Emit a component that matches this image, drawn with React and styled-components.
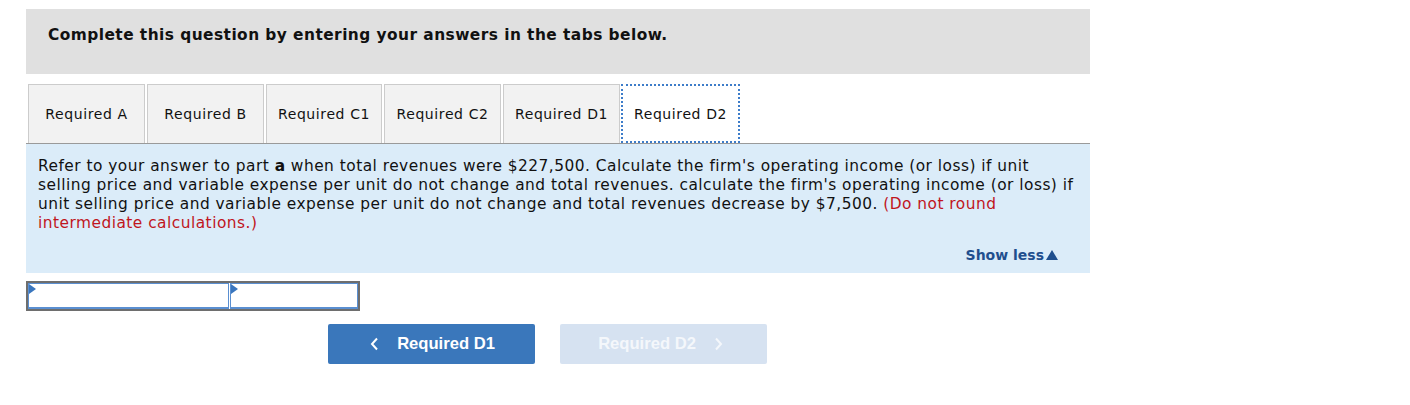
import React from "react";
import styled, { createGlobalStyle } from "styled-components";

const GlobalStyle = createGlobalStyle`
  body {
    margin: 0;
    background: #ffffff;
    font-family: "DejaVu Sans", Verdana, sans-serif;
    color: #111;
  }
`;

const Page = styled.div`
  width: 1064px;
  padding: 9px 0 0 26px;
`;

const Banner = styled.div`
  height: 65px;
  background: #e0e0e0;
  padding: 16px 0 0 22px;
  box-sizing: border-box;
  font-size: 15.4px;
  letter-spacing: 0.45px;
  font-weight: bold;
  line-height: 21px;
`;

const TabRow = styled.div`
  display: flex;
  gap: 2px;
  margin-top: 10px;
  padding-left: 2px;
  border-bottom: 1px solid #9a9a9a;
`;

const Tab = styled.div`
  width: ${(p) => p.$w}px;
  height: 59px;
  box-sizing: border-box;
  display: flex;
  align-items: center;
  justify-content: center;
  font-size: 14px;
  letter-spacing: 0.6px;
  white-space: nowrap;
  color: #111;
  background: ${(p) => (p.$active ? "#ffffff" : "#f2f2f2")};
  border: ${(p) => (p.$active ? "2px dotted #3d7cc9" : "1px solid #cccccc")};
  border-bottom: ${(p) => (p.$active ? "2px dotted #3d7cc9" : "none")};
  margin-bottom: ${(p) => (p.$active ? "-1px" : "0")};
  margin-left: ${(p) => (p.$active ? "-1px" : "0")};
`;

const Panel = styled.div`
  background: #dbecf9;
  padding: 13px 12px 10px 12px;
  height: 129px;
  box-sizing: border-box;
  display: flex;
  flex-direction: column;
`;

const Prompt = styled.p`
  margin: 0;
  font-size: 15.4px;
  letter-spacing: 0.48px;
  line-height: 19px;
  white-space: nowrap;
  color: #111;
`;

const Note = styled.span`
  color: #c0161d;
`;

const ShowLess = styled.div`
  margin-top: auto;
  align-self: flex-end;
  margin-right: 20px;
  font-size: 14px;
  font-weight: bold;
  color: #1f4f8e;
  display: flex;
  align-items: center;
  gap: 2px;
`;

const Triangle = styled.span`
  width: 0;
  height: 0;
  border-left: 6px solid transparent;
  border-right: 6px solid transparent;
  border-bottom: 10px solid #1f4f8e;
`;

const AnswerTable = styled.div`
  margin-top: 8px;
  display: inline-flex;
  gap: 1px;
  border: 2px solid #6e6e6e;
  background: #fff;
`;

const Cell = styled.div`
  position: relative;
  width: ${(p) => p.$w}px;
  height: 23px;
  border: 1px solid #5a8fd1;
  border-bottom-width: 2px;
  background: #fff;
  &::before {
    content: "";
    position: absolute;
    left: 0;
    top: 0;
    border-top: 5px solid transparent;
    border-bottom: 5px solid transparent;
    border-left: 7px solid #3a76be;
  }
`;

const NavRow = styled.div`
  display: flex;
  gap: 25px;
  margin-top: 11px;
  padding-left: 302px;
`;

const NavButton = styled.button`
  width: 207px;
  height: 40px;
  border: none;
  border-radius: 2px;
  font-family: "Liberation Sans", Arial, sans-serif;
  font-size: 16.6px;
  font-weight: bold;
  display: flex;
  align-items: center;
  justify-content: center;
  gap: 18px;
  background: ${(p) => (p.$disabled ? "#d6e2f1" : "#3a77bb")};
  color: ${(p) => (p.$disabled ? "#f4f7fb" : "#ffffff")};
  padding: 0 ${(p) => (p.$disabled ? "6px" : "0")} 0 ${(p) => (p.$disabled ? "0" : "2px")};
`;

const Chevron = ({ dir }) => (
  <svg width="9" height="14" viewBox="0 0 9 14">
    <path
      d={dir === "left" ? "M7 1.5 L2 7 L7 12.5" : "M2 1.5 L7 7 L2 12.5"}
      fill="none"
      stroke="currentColor"
      strokeWidth="2"
    />
  </svg>
);

const tabs = [
  { label: "Required A", w: 117 },
  { label: "Required B", w: 117 },
  { label: "Required C1", w: 116 },
  { label: "Required C2", w: 117 },
  { label: "Required D1", w: 117 },
  { label: "Required D2", w: 119, active: true },
];

export default function App() {
  return (
    <Page>
      <GlobalStyle />
      <Banner>Complete this question by entering your answers in the tabs below.</Banner>
      <TabRow>
        {tabs.map((t) => (
          <Tab key={t.label} $w={t.w} $active={t.active}>
            {t.label}
          </Tab>
        ))}
      </TabRow>
      <Panel>
        <Prompt>
          Refer to your answer to part <b>a</b> when total revenues were $227,500. Calculate the firm's operating
          income (or loss) if unit
          <br />
          selling price and variable expense per unit do not change and total revenues. calculate the firm's
          operating income (or loss) if
          <br />
          unit selling price and variable expense per unit do not change and total revenues decrease by $7,500.{" "}
          <Note>(Do not round</Note>
          <br />
          <Note>intermediate calculations.)</Note>
        </Prompt>
        <ShowLess>
          Show less
          <Triangle />
        </ShowLess>
      </Panel>
      <AnswerTable>
        <Cell $w={199} />
        <Cell $w={126} />
      </AnswerTable>
      <NavRow>
        <NavButton>
          <Chevron dir="left" />
          Required D1
        </NavButton>
        <NavButton $disabled>
          Required D2
          <Chevron dir="right" />
        </NavButton>
      </NavRow>
    </Page>
  );
}
